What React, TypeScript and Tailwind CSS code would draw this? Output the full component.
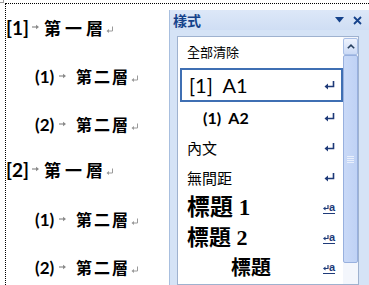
import React from "react";

const Tab = () => (
  <svg width="8" height="6" viewBox="0 0 8 6" className="shrink-0">
    <path d="M0 3 H6" stroke="#8a8a8a" strokeWidth="1.2" />
    <path d="M4 0.8 L7 3 L4 5.2 Z" fill="#8a8a8a" />
  </svg>
);

const DocRet = () => (
  <svg width="8" height="8" viewBox="0 0 8 8" className="shrink-0 mt-[6px]">
    <path d="M6.5 0.5 V5 H1.5" stroke="#9a9a9a" strokeWidth="1" fill="none" />
    <path d="M0.5 5 L3 3 L3 7 Z" fill="#9a9a9a" />
  </svg>
);

const Ret = () => (
  <svg width="11" height="9" viewBox="0 0 11 9" className="shrink-0">
    <path d="M9.5 0 V5.5 H2" stroke="#1e3a78" strokeWidth="1.6" fill="none" />
    <path d="M0.5 5.5 L4 2.5 L4 8.5 Z" fill="#1e3a78" />
  </svg>
);

const Linked = () => (
  <span className="flex items-end border-b border-[#1e3a78] pb-[0px] leading-none text-[#1e3a78]">
    <svg width="6" height="6" viewBox="0 0 6 6" className="mb-[2px]">
      <path d="M5 0 V3.5 H1.5" stroke="#1e3a78" strokeWidth="1.2" fill="none" />
      <path d="M0 3.5 L2.5 1.5 L2.5 5.5 Z" fill="#1e3a78" />
    </svg>
    <span className="text-[11px] font-bold" style={{ fontFamily: "'Liberation Sans', sans-serif" }}>a</span>
  </span>
);

const cjk = { fontFamily: "'Noto Sans CJK TC', 'Noto Sans CJK SC', sans-serif" };
const lat = { fontFamily: "Lato, 'Open Sans', sans-serif" };
const serif = { fontFamily: "'Liberation Serif', 'Noto Sans CJK TC', serif" };

function L1({ n, mt }: { n: string; mt: string }) {
  return (
    <div className={`flex items-center h-[24px] ${mt}`}>
      <span className="text-[19px] font-bold text-black leading-none w-[24px]" style={lat}>
        [{n}]
      </span>
      <span className="ml-[2px]"><Tab /></span>
      <span className="ml-[4px] text-[17px] font-bold tracking-[4px] text-black leading-none" style={cjk}>
        第一層
      </span>
      <span className="ml-[-1px]"><DocRet /></span>
    </div>
  );
}

function L2({ n, mt }: { n: string; mt: string }) {
  return (
    <div className={`flex items-center h-[24px] pl-[29px] ${mt}`}>
      <span className="text-[17px] font-bold text-black leading-none w-[21px]" style={lat}>
        ({n})
      </span>
      <span className="ml-[3px]"><Tab /></span>
      <span className="ml-[9px] text-[16px] font-bold tracking-[2px] text-black leading-none" style={cjk}>
        第二層
      </span>
      <span className="ml-[1px]"><DocRet /></span>
    </div>
  );
}

function Row({
  h,
  children,
  right,
  extra = "",
}: {
  h: string;
  children: React.ReactNode;
  right: React.ReactNode;
  extra?: string;
}) {
  return (
    <div className={`flex items-center ${h} pl-[9px] pr-[8px] ${extra}`}>
      <div className="flex-1 flex items-center">{children}</div>
      {right}
    </div>
  );
}

export default function App() {
  return (
    <div className="relative w-[369px] h-[285px] bg-white overflow-hidden">
      <div className="absolute left-0 top-0 w-[4px] h-[3px] border-r border-b border-[#9a9a9a]" />
      <div className="pt-[3px] pl-[5px] h-full">
        <div className="flex h-full border-t border-l border-dotted border-black">
          <div className="w-[163px] shrink-0 pt-[11px]">
            <L1 n="1" mt="" />
            <L2 n="1" mt="mt-[25px]" />
            <L2 n="2" mt="mt-[24px]" />
            <L1 n="2" mt="mt-[21px]" />
            <L2 n="1" mt="mt-[26px]" />
            <L2 n="2" mt="mt-[24px]" />
          </div>
          <div className="flex-1 mt-[6px] flex flex-col bg-[#d5e3f6] border-l border-[#a8bfdf]">
            <div className="h-[20px] flex items-center bg-gradient-to-b from-[#dde8f8] to-[#cfdef4]">
              <span className="pl-[3px] text-[14px] font-bold text-[#15428b] leading-none" style={cjk}>
                樣式
              </span>
              <div className="flex-1" />
              <svg width="9" height="6" viewBox="0 0 9 6" className="mr-[9px]">
                <path d="M0 0 H9 L4.5 5.5 Z" fill="#15428b" />
              </svg>
              <svg width="9" height="9" viewBox="0 0 9 9" className="mr-[7px]">
                <path d="M1 1 L8 8 M8 1 L1 8" stroke="#15428b" strokeWidth="1.8" />
              </svg>
            </div>
            <div className="flex-1 pl-[7px] pr-[10px] pt-[6px]">
              <div className="h-full bg-white border border-[#9fb2cf] flex">
                <div className="flex-1 flex flex-col">
                  <Row h="h-[31px] pb-[2px]" right={null}>
                    <span className="text-[13px] text-black leading-none" style={cjk}>全部清除</span>
                  </Row>
                  <div className="h-[34px] ml-[2px] border-2 border-[#3f6fb3] flex items-center pl-[7px] pr-[6px]">
                    <span className="flex-1 text-[20px] text-black leading-none whitespace-pre" style={lat}>
                      [1]  A1
                    </span>
                    <Ret />
                  </div>
                  <Row h="h-[31px]" right={<Ret />}>
                    <span className="pl-[16px] text-[16px] font-bold text-black leading-none whitespace-pre" style={lat}>
                      (1)  A2
                    </span>
                  </Row>
                  <Row h="h-[29px]" right={<Ret />}>
                    <span className="text-[15px] text-black leading-none" style={cjk}>內文</span>
                  </Row>
                  <Row h="h-[30px]" right={<Ret />}>
                    <span className="text-[15px] text-black leading-none" style={cjk}>無間距</span>
                  </Row>
                  <Row h="h-[31px]" right={<Linked />}>
                    <span className="text-[23px] font-bold text-black leading-none" style={serif}>標題 1</span>
                  </Row>
                  <Row h="h-[30px]" right={<Linked />}>
                    <span className="text-[22px] font-bold text-black leading-none" style={serif}>標題 2</span>
                  </Row>
                  <Row h="h-[30px]" right={<Linked />}>
                    <span className="pl-[44px] text-[20px] font-bold text-black leading-none" style={serif}>標題</span>
                  </Row>
                </div>
                <div className="w-[15px] flex flex-col pt-[1px] bg-[#f3f6fc]">
                  <div className="h-[17px] rounded-[2px] border border-[#a9bfe6] bg-gradient-to-b from-[#eef3fd] to-[#cbdaf6] flex items-center justify-center">
                    <svg width="8" height="5" viewBox="0 0 8 5">
                      <path d="M0.8 4.3 L4 1.2 L7.2 4.3" stroke="#28405f" strokeWidth="1.6" fill="none" />
                    </svg>
                  </div>
                  <div className="h-[208px] rounded-[2px] border border-[#98b0de] bg-gradient-to-r from-[#c9d9f7] to-[#bfd2f5] flex items-center justify-center">
                    <div className="flex flex-col gap-[1px]">
                      <div className="w-[7px] h-[1px] bg-[#eaf0fc]" />
                      <div className="w-[7px] h-[1px] bg-[#eaf0fc]" />
                      <div className="w-[7px] h-[1px] bg-[#eaf0fc]" />
                      <div className="w-[7px] h-[1px] bg-[#eaf0fc]" />
                    </div>
                  </div>
                </div>
              </div>
            </div>
          </div>
        </div>
      </div>
    </div>
  );
}
